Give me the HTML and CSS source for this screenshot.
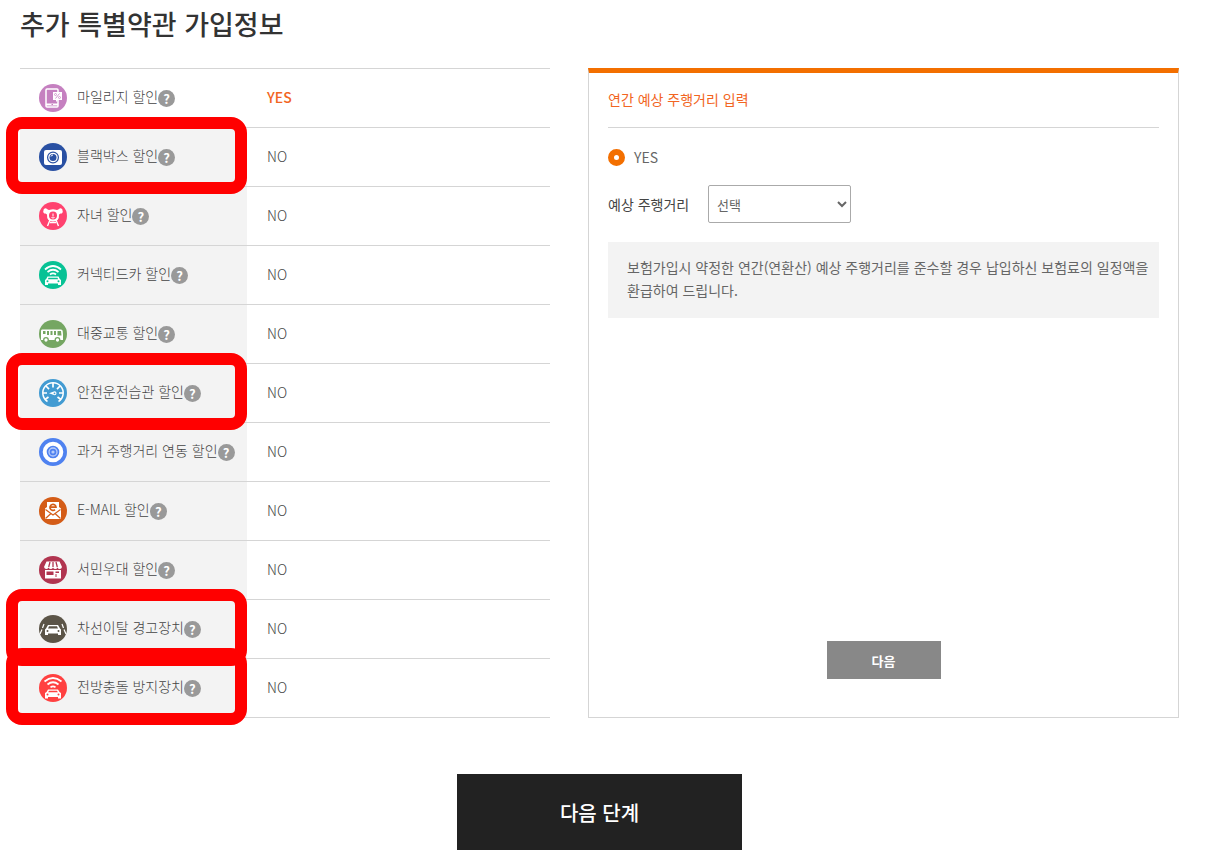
FILE: index.html
```html
<!DOCTYPE html>
<html lang="ko">
<head>
<meta charset="UTF-8" />
<meta name="viewport" content="width=device-width, initial-scale=1" />
<title>추가 특별약관 가입정보</title>
<link rel="stylesheet" href="styles.css">
</head>
<body>
<main class="page">
  <h1>추가 특별약관 가입정보</h1>

  <div class="columns">
    <!-- 특약 목록 -->
    <table class="options">
      <tbody>
        <tr class="active">
          <th scope="row"><div class="option">
            <svg class="icon" viewBox="0 0 28 28" aria-hidden="true">
              <circle cx="14" cy="14" r="14" fill="#c580c0"/>
              <rect x="7" y="5" width="12" height="18" rx="1" fill="none" stroke="#fff" stroke-width="1.5"/>
              <path d="M7 20.500h12" stroke="#fff" stroke-width="2"/>
              <path d="M12.500 20.500h1.500" stroke="#c580c0"/>
              <path d="M14 8h9v8h-4l-2 2v-2h-3z" fill="#fff"/>
              <path d="M16.500 14.500l4-5" stroke="#c580c0" stroke-width=".8"/>
              <circle cx="16.500" cy="10.500" r="1" fill="none" stroke="#c580c0" stroke-width=".7"/>
              <circle cx="20.500" cy="13.500" r="1" fill="none" stroke="#c580c0" stroke-width=".7"/>
            </svg>
            <span>마일리지 할인</span><button type="button" class="help" aria-label="도움말">?</button>
          </div></th>
          <td>YES</td>
        </tr>
        <tr>
          <th scope="row" class="marked"><div class="option">
            <svg class="icon" viewBox="0 0 28 28" aria-hidden="true">
              <circle cx="14" cy="14" r="14" fill="#2950a3"/>
              <rect x="5" y="7" width="18" height="15" rx="2" fill="#fff"/>
              <circle cx="14" cy="14.5" r="5.4" fill="none" stroke="#2950a3" stroke-width="1.2"/>
              <circle cx="14" cy="14.5" r="3.5" fill="#2950a3"/>
              <path d="M12 13.5a2 2 0 0 1 2-1.500" fill="none" stroke="#fff"/>
            </svg>
            <span>블랙박스 할인</span><button type="button" class="help" aria-label="도움말">?</button>
          </div></th>
          <td>NO</td>
        </tr>
        <tr>
          <th scope="row"><div class="option">
            <svg class="icon" viewBox="0 0 28 28" aria-hidden="true">
              <circle cx="14" cy="14" r="14" fill="#ff426f"/>
              <path d="M4.500 8.500a2 2 0 0 1 3.500-1.500q1.500 1.200 3 .8q3-1 6 0q1.500.4 3-.8a2 2 0 0 1 3.500 1.500a2 2 0 0 1-2 3l-1.500 1q.5 7-6 7t-6-7L6.500 11.500a2 2 0 0 1-2-3z" fill="#fff"/>
              <circle cx="14" cy="13.500" r="4" fill="#ff426f"/>
              <path d="M14 11.500v3M12.500 15.500q1.500 1 3 0" fill="none" stroke="#fff"/>
              <path d="M11 18l-2.500 6M17 18l2.500 6M11 20.500h6" fill="none" stroke="#fff" stroke-width="1.4"/>
            </svg>
            <span>자녀 할인</span><button type="button" class="help" aria-label="도움말">?</button>
          </div></th>
          <td>NO</td>
        </tr>
        <tr>
          <th scope="row"><div class="option">
            <svg class="icon" viewBox="0 0 28 28" aria-hidden="true">
              <circle cx="14" cy="14" r="14" fill="#07c295"/>
              <path d="M6 8.500q8-7 16 0M8.500 11q5.500-4.500 11 0M11 13.500q3-2.200 6 0" fill="none" stroke="#fff" stroke-width="1.7"/>
              <path d="M8.500 15.500h11l1.300 2.500 1.200 1v5h-3v-1.500H9V24H6v-5l1.200-1z" fill="#fff"/>
              <path d="M9.500 16.800h9l.6 1.400H8.900z" fill="#07c295"/>
              <circle cx="8.500" cy="20.300" r="1" fill="#07c295"/><circle cx="19.500" cy="20.300" r="1" fill="#07c295"/>
            </svg>
            <span>커넥티드카 할인</span><button type="button" class="help" aria-label="도움말">?</button>
          </div></th>
          <td>NO</td>
        </tr>
        <tr>
          <th scope="row"><div class="option">
            <svg class="icon" viewBox="0 0 28 28" aria-hidden="true">
              <circle cx="14" cy="14" r="14" fill="#75a662"/>
              <path d="M3 9.500h19q1.500 0 1.700 1.500l.3 4v5H2v-9q0-1.500 1-1.500z" fill="#fff"/>
              <path d="M4 11h2.500v3H4zM8 11h2v4H8zM11.500 11h2v4h-2zM15 11h2v4h-2zM18.500 11h3.500l.5 4.500h-4z" fill="#75a662"/>
              <circle cx="7" cy="20" r="2.300" fill="#fff" stroke="#75a662" stroke-width="1.300"/>
              <circle cx="18.500" cy="20" r="2.300" fill="#fff" stroke="#75a662" stroke-width="1.300"/>
            </svg>
            <span>대중교통 할인</span><button type="button" class="help" aria-label="도움말">?</button>
          </div></th>
          <td>NO</td>
        </tr>
        <tr>
          <th scope="row" class="marked"><div class="option">
            <svg class="icon" viewBox="0 0 28 28" aria-hidden="true">
              <circle cx="14" cy="14" r="14" fill="#429bd2"/>
              <path d="M8.500 22.500a10.200 10.200 0 1 1 11 0" fill="none" stroke="#fff" stroke-width="1.500"/>
              <path d="M14 4v4.500M7 7l3 3.200M21 7l-3 3.200M4 14h4M24 14h-4M6 20.500l3.500-2.500M22 20.500L18.500 18" stroke="#fff" stroke-width="1.700"/>
              <path d="M10 14.300l5.500-2a2 2 0 1 1 0 4z" fill="#fff"/>
              <circle cx="15.500" cy="14.300" r=".9" fill="#429bd2"/>
            </svg>
            <span>안전운전습관 할인</span><button type="button" class="help" aria-label="도움말">?</button>
          </div></th>
          <td>NO</td>
        </tr>
        <tr>
          <th scope="row"><div class="option">
            <svg class="icon" viewBox="0 0 28 28" aria-hidden="true">
              <circle cx="14" cy="14" r="14" fill="#4f82f0"/>
              <circle cx="14" cy="14" r="8.300" fill="none" stroke="#fff" stroke-width="4"/>
              <circle cx="14" cy="14" r="4" fill="#4f82f0" stroke="#b9cdf9" stroke-width="1.300"/>
              <circle cx="14" cy="14" r="1.600" fill="#b9cdf9"/>
            </svg>
            <span>과거 주행거리 연동 할인</span><button type="button" class="help" aria-label="도움말">?</button>
          </div></th>
          <td>NO</td>
        </tr>
        <tr>
          <th scope="row"><div class="option">
            <svg class="icon" viewBox="0 0 28 28" aria-hidden="true">
              <circle cx="14" cy="14" r="14" fill="#d45c17"/>
              <path d="M6 11.500l2-1.500V5h12v5l2 1.500V22H6z" fill="#fff"/>
              <path d="M6.500 12.500l7.500 5.500 7.500-5.500M6.500 21.500l5.500-5M21.500 21.500l-5.500-5" fill="none" stroke="#d45c17" stroke-width="1.200"/>
              <path d="M11 10.200h6a3 3 0 1 0-1 2.400" fill="none" stroke="#d45c17" stroke-width="1.700"/>
            </svg>
            <span>E-MAIL 할인</span><button type="button" class="help" aria-label="도움말">?</button>
          </div></th>
          <td>NO</td>
        </tr>
        <tr>
          <th scope="row"><div class="option">
            <svg class="icon" viewBox="0 0 28 28" aria-hidden="true">
              <circle cx="14" cy="14" r="14" fill="#b13550"/>
              <path d="M7.500 5.500h13L23 11q-.5 2-2.200 2T18.500 11.500q-.7 1.500-2.200 1.500T14 11.500Q13.200 13 11.700 13T9.500 11.500Q8.700 13 7.200 13T5 11z" fill="#fff"/>
              <path d="M11 6l-1.300 5M14 6v5M17 6l1.300 5" stroke="#b13550" stroke-width="1.300"/>
              <path d="M6 14h16v8.500H6z" fill="#fff"/>
              <path d="M7.500 15.500h7v3.500h-7zM16.500 15.500h3.500v1.500h-3.500zM16.500 18h1v3h-1z" fill="#b13550"/>
            </svg>
            <span>서민우대 할인</span><button type="button" class="help" aria-label="도움말">?</button>
          </div></th>
          <td>NO</td>
        </tr>
        <tr>
          <th scope="row" class="marked"><div class="option">
            <svg class="icon" viewBox="0 0 28 28" aria-hidden="true">
              <circle cx="14" cy="14" r="14" fill="#5b5447"/>
              <path d="M5 9l-1.500 4M3 14.500L1 19M23 9l1.500 4M25 14.500l2 4.500" stroke="#fff" stroke-width="1.200"/>
              <path d="M9 10h10l2 3.500 1 1V20h-3v-1.500H9V20H6v-5.500l1-1z" fill="#fff"/>
              <path d="M10 11.300h8l1 2.200H9z" fill="#5b5447"/>
              <circle cx="8.500" cy="16" r="1" fill="#5b5447"/><circle cx="19.500" cy="16" r="1" fill="#5b5447"/>
            </svg>
            <span>차선이탈 경고장치</span><button type="button" class="help" aria-label="도움말">?</button>
          </div></th>
          <td>NO</td>
        </tr>
        <tr>
          <th scope="row" class="marked"><div class="option">
            <svg class="icon" viewBox="0 0 28 28" aria-hidden="true">
              <circle cx="14" cy="14" r="14" fill="#ff4141"/>
              <path d="M5.500 7.500q8.500-7 17 0M8.500 10.500q5.500-4.500 11 0M11.500 13.300q2.500-2 5 0" fill="none" stroke="#fff" stroke-width="1.700"/>
              <path d="M9 15.500h10l1.500 2.500 1.500 1v5.500h-3V23H9v1.500H6V19l1.500-1z" fill="#fff"/>
              <path d="M10 16.800h8l.8 1.500H9.200z" fill="#ff4141"/>
              <circle cx="8.500" cy="20.500" r="1" fill="#ff4141"/><circle cx="19.500" cy="20.500" r="1" fill="#ff4141"/>
            </svg>
            <span>전방충돌 방지장치</span><button type="button" class="help" aria-label="도움말">?</button>
          </div></th>
          <td>NO</td>
        </tr>
      </tbody>
    </table>

    <!-- 선택한 특약 입력 -->
    <section class="panel">
      <h2>연간 예상 주행거리 입력</h2>
      <label class="radio"><input type="radio" name="mileage" checked /> YES</label>
      <div class="field">
        <label for="distance">예상 주행거리</label>
        <select id="distance">
          <option>선택</option>
        </select>
      </div>
      <p class="notice">보험가입시 약정한 연간(연환산) 예상 주행거리를 준수할 경우 납입하신 보험료의 일정액을 환급하여 드립니다.</p>
      <button type="button" class="btn-next">다음</button>
    </section>
  </div>

  <button type="button" class="btn-step">다음 단계</button>
</main>
</body>
</html>
```

FILE: styles.css
```css
:root {
  --orange: #f36f00;
  --orange-text: #f26522;
  --line: #d5d5d5;
  --gray-bg: #f3f3f3;
  --text: #444;
  --text-sub: #666;
}
*, *::before, *::after {
  box-sizing: border-box;
}
body {
  margin: 0;
  font-family: "Noto Sans CJK KR", sans-serif;
  font-size: 14px;
  line-height: 23px;
  color: var(--text);
  background: #fff;
}
button, select {
  font-family: inherit;
}
.page {
  padding: 4px 35px 15px 20px;
}
h1 {
  margin: 0 0 24px;
  font-size: 27px;
  line-height: 40px;
  font-weight: 500;
  color: #333;
}
.columns {
  display: grid;
  grid-template-columns: 530fr 591fr;
  gap: 38px;
}

/* 특약 목록 */
.options {
  width: 100%;
  border-collapse: collapse;
  table-layout: fixed;
}
.options tr {
  height: 59px;
  border-top: 1px solid var(--line);
  border-bottom: 1px solid var(--line);
}
.options th {
  position: relative;
  width: 227px;
  padding: 0 0 0 19px;
  background: var(--gray-bg);
  font-weight: 300;
  text-align: left;
}
.options td {
  padding: 0 20px 2px;
  font-weight: 300;
}
.options .active th {
  background: #fff;
}
.options .active td {
  color: var(--orange-text);
  font-weight: 500;
}
.option {
  display: flex;
  align-items: center;
  white-space: nowrap;
}
.option span {
  padding-bottom: 3px;
}
.icon {
  width: 28px;
  height: 28px;
  margin-right: 10px;
}
.help {
  width: 17px;
  height: 17px;
  padding: 0;
  border: none;
  border-radius: 50%;
  background: #999;
  color: #fff;
  font-size: 13px;
  line-height: 17px;
  font-weight: 700;
  cursor: pointer;
}
/* 빨간 강조 테두리 */
.marked::after {
  content: "";
  position: absolute;
  z-index: 1;
  top: -11px;
  left: -14px;
  right: 0;
  height: 77px;
  border: 12px solid #f00;
  border-radius: 16px;
  pointer-events: none;
}

/* 입력 패널 */
.panel {
  display: flex;
  flex-direction: column;
  padding: 0 19px 38px;
  border: 1px solid var(--line);
  border-top: 5px solid var(--orange);
}
.panel h2 {
  margin: 0 0 18px;
  padding: 15px 0 16px;
  border-bottom: 1px solid var(--line);
  font-size: 14px;
  font-weight: 400;
  color: var(--orange-text);
}
.radio {
  display: flex;
  align-items: center;
  gap: 9px;
  color: var(--text-sub);
}
.radio input {
  appearance: none;
  width: 17px;
  height: 17px;
  margin: 0;
  border: 6px solid var(--orange);
  border-radius: 50%;
  background: #fff;
}
.field {
  display: flex;
  align-items: center;
  margin: 16px 0 19px;
}
.field label {
  width: 100px;
}
.field select {
  width: 143px;
  height: 38px;
  padding: 0 0 0 4px;
  border: 1px solid #aaa;
  border-radius: 2px;
  background: #fff;
  color: var(--text-sub);
  font-size: 13px;
}
.notice {
  margin: 0;
  padding: 14px 8px 16px 19px;
  background: var(--gray-bg);
  color: var(--text-sub);
  word-break: keep-all;
}
.btn-next {
  align-self: center;
  width: 114px;
  height: 38px;
  margin-top: auto;
  border: none;
  background: #888;
  color: #fff;
  font-size: 13px;
  font-weight: 700;
  cursor: pointer;
}
.btn-step {
  display: block;
  width: 285px;
  height: 76px;
  margin: 56px auto 0;
  border: none;
  background: #222;
  color: #fff;
  font-size: 20px;
  font-weight: 500;
  cursor: pointer;
}
```
